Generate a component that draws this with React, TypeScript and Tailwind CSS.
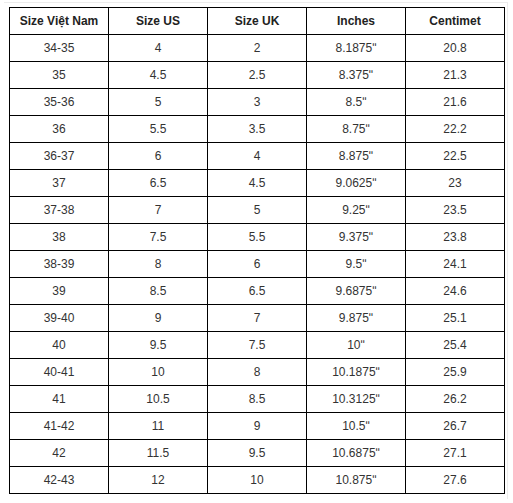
import React from "react";

const headers = ["Size Việt Nam", "Size US", "Size UK", "Inches", "Centimet"];
const rows: string[][] = [
  ["34-35", "4", "2", "8.1875\u02BA", "20.8"],
  ["35", "4.5", "2.5", "8.375\u02BA", "21.3"],
  ["35-36", "5", "3", "8.5\u02BA", "21.6"],
  ["36", "5.5", "3.5", "8.75\u02BA", "22.2"],
  ["36-37", "6", "4", "8.875\u02BA", "22.5"],
  ["37", "6.5", "4.5", "9.0625\u02BA", "23"],
  ["37-38", "7", "5", "9.25\u02BA", "23.5"],
  ["38", "7.5", "5.5", "9.375\u02BA", "23.8"],
  ["38-39", "8", "6", "9.5\u02BA", "24.1"],
  ["39", "8.5", "6.5", "9.6875\u02BA", "24.6"],
  ["39-40", "9", "7", "9.875\u02BA", "25.1"],
  ["40", "9.5", "7.5", "10\u02BA", "25.4"],
  ["40-41", "10", "8", "10.1875\u02BA", "25.9"],
  ["41", "10.5", "8.5", "10.3125\u02BA", "26.2"],
  ["41-42", "11", "9", "10.5\u02BA", "26.7"],
  ["42", "11.5", "9.5", "10.6875\u02BA", "27.1"],
  ["42-43", "12", "10", "10.875\u02BA", "27.6"],
];

export default function App() {
  return (
    <div
      className="w-[513px] h-[503px] bg-white pt-[2px] pl-[4px]"
      style={{ fontFamily: '"Liberation Sans", Arial, sans-serif' }}
    >
      <div className="w-[504px] h-[497px] border-t border-r border-[#ececec] pt-[4px] pl-[5px]">
        <div className="grid grid-cols-[repeat(5,99px)] w-[496px] border-l border-t border-black">
          {headers.map((h) => (
            <div
              key={h}
              className="h-[27px] border-r border-b border-black flex items-center justify-center text-[12px] font-bold text-[#222]"
            >
              {h}
            </div>
          ))}
          {rows.map((r, i) =>
            r.map((c, j) => (
              <div
                key={`${i}-${j}`}
                className="h-[27px] border-r border-b border-black flex items-center justify-center text-[12px] text-[#333]"
              >
                {c}
              </div>
            ))
          )}
        </div>
      </div>
    </div>
  );
}
